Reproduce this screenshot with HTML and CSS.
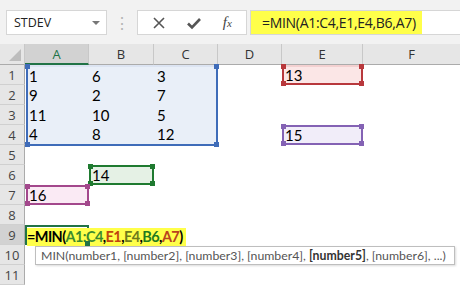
FILE: index.html
```html
<!doctype html>
<html lang="en">

<head>
  <meta charset="UTF-8" />
  <title>MIN formula</title>
  <link rel="stylesheet" href="styles.css">
</head>

<body>
  <div class="toolbar">
    <div class="namebox">
      <span class="name">STDEV</span>
      <span class="caret"></span>
    </div>
    <div class="grip">⋮</div>
    <div class="fx-buttons">
      <svg class="ico" width="14" height="14" viewBox="0 0 14 14"><path d="M2 2 L12 12 M12 2 L2 12" stroke="#555" stroke-width="1.6" fill="none" /></svg>
      <svg class="ico" width="16" height="14" viewBox="0 0 16 14"><path d="M2 7.5 L6 11.5 L14 3" stroke="#555" stroke-width="2.6" fill="none" /></svg>
      <span class="fx">f<sub>x</sub></span>
    </div>
    <div class="formula"><span class="hl">=MIN(A1:C4,E1,E4,B6,A7)</span></div>
  </div>

  <div class="sheet">
    <div class="corner"><span class="tri"></span></div>
    <div class="colhead sel">A</div>
    <div class="colhead">B</div>
    <div class="colhead">C</div>
    <div class="colhead">D</div>
    <div class="colhead">E</div>
    <div class="colhead last">F</div>

    <div class="rowhead r1">1</div>
    <div class="rowhead r2">2</div>
    <div class="rowhead r3">3</div>
    <div class="rowhead r4">4</div>
    <div class="rowhead r5">5</div>
    <div class="rowhead r6">6</div>
    <div class="rowhead r7">7</div>
    <div class="rowhead r8">8</div>
    <div class="rowhead r9 sel">9</div>
    <div class="rowhead r10">10</div>
    <div class="rowhead r11">11</div>

    <div class="ref ref-range">
      <span class="h tl"></span><span class="h tr"></span><span class="h bl"></span><span class="h br"></span>
      <div class="cell">1</div><div class="cell">6</div><div class="cell">3</div>
      <div class="cell">9</div><div class="cell">2</div><div class="cell">7</div>
      <div class="cell">11</div><div class="cell">10</div><div class="cell">5</div>
      <div class="cell">4</div><div class="cell">8</div><div class="cell">12</div>
    </div>

    <div class="ref ref-e1">
      <span class="h tl"></span><span class="h tr"></span><span class="h bl"></span><span class="h br"></span>
      <div class="cell">13</div>
    </div>

    <div class="ref ref-e4">
      <span class="h tl"></span><span class="h tr"></span><span class="h bl"></span><span class="h br"></span>
      <div class="cell">15</div>
    </div>

    <div class="ref ref-b6">
      <span class="h tl"></span><span class="h tr"></span><span class="h bl"></span><span class="h br"></span>
      <div class="cell">14</div>
    </div>

    <div class="ref ref-a7">
      <span class="h tl"></span><span class="h tr"></span><span class="h bl"></span><span class="h br"></span>
      <div class="cell">16</div>
    </div>

    <div class="active">
      <span class="h br"></span>
      <span class="edit">=MIN(<span class="c1">A1:C4</span>,<span class="c2">E1</span>,<span class="c3">E4</span>,<span class="c4">B6</span>,<span class="c5">A7</span>)</span>
    </div>

    <div class="tip">MIN(number1, [number2], [number3], [number4], <b>[number5]</b>, [number6], ...)</div>
  </div>
</body>

</html>
```

FILE: styles.css
```css
* {
  box-sizing: border-box;
}

body {
  margin: 0;
  background: #FFFFFF;
  font-family: Lato, "Liberation Sans", sans-serif;
  color: #000000;
  width: 460px;
  height: 286px;
  overflow: hidden;
}

/* formula bar */

.toolbar {
  display: flex;
  align-items: center;
  height: 44px;
  padding: 10px 0 9px 6px;
  background: #F2F2F2;
}

.namebox {
  display: flex;
  align-items: center;
  justify-content: space-between;
  width: 101px;
  height: 25px;
  padding: 0 6px 0 7px;
  background: #FFFFFF;
  border: 1px solid #D6D6D6;
  font-family: "Open Sans", sans-serif;
  font-size: 12.5px;
  color: #222222;
}

.caret {
  width: 0;
  height: 0;
  border-left: 4px solid transparent;
  border-right: 4px solid transparent;
  border-top: 4px solid #777777;
}

.grip {
  width: 30px;
  text-align: center;
  color: #B5B5B5;
  font-size: 16px;
}

.fx-buttons {
  display: flex;
  align-items: center;
  justify-content: space-around;
  width: 110px;
  height: 25px;
  padding: 0 4px;
  background: #FFFFFF;
  border: 1px solid #D6D6D6;
}

.fx {
  font-family: "Liberation Serif", serif;
  font-style: italic;
  font-size: 15px;
  color: #444444;
}

.fx sub {
  font-size: 11px;
  vertical-align: 0;
}

.formula {
  flex: 1;
  height: 25px;
  margin-left: 3px;
  background: #FFFFFF;
  border: 1px solid #D6D6D6;
  border-right: none;
}

.formula .hl {
  display: inline-block;
  height: 100%;
  padding: 0 6px 0 11px;
  line-height: 23px;
  background: #FFFF4A;
  font-family: "Open Sans", sans-serif;
  font-size: 14px;
  letter-spacing: -0.3px;
  color: #222222;
}

/* sheet grid */

.sheet {
  display: grid;
  grid-template-columns: 25px 64px 65px 64px 64px 81px 1fr;
  grid-template-rows: 21px repeat(11, 20px);
  font-size: 15px;
}

.corner {
  position: relative;
  grid-column: 1;
  grid-row: 1;
  background: #E6E6E6;
  border-right: 1px solid #C8C8C8;
  border-bottom: 1px solid #ABABAB;
}

.corner .tri {
  position: absolute;
  right: 3px;
  bottom: 3px;
  width: 0;
  height: 0;
  border-left: 12px solid transparent;
  border-bottom: 12px solid #BDBDBD;
}

.colhead {
  grid-row: 1;
  display: flex;
  align-items: center;
  justify-content: center;
  background: #E6E6E6;
  border-right: 1px solid #C8C8C8;
  border-bottom: 1px solid #ABABAB;
  font-family: "Open Sans", sans-serif;
  font-size: 13px;
  color: #333333;
}

.colhead.last {
  border-right: none;
}

.colhead.sel {
  background: #D2D2D2;
  color: #217346;
  border-bottom: 2px solid #217346;
}

.rowhead {
  grid-column: 1;
  display: flex;
  align-items: center;
  justify-content: center;
  background: #E6E6E6;
  border-right: 1px solid #ABABAB;
  border-bottom: 1px solid #D0D0D0;
  font-family: "Open Sans", sans-serif;
  font-size: 13px;
  color: #444444;
}

.rowhead.sel {
  background: #D2D2D2;
}

.r1 { grid-row: 2; }
.r2 { grid-row: 3; }
.r3 { grid-row: 4; }
.r4 { grid-row: 5; }
.r5 { grid-row: 6; }
.r6 { grid-row: 7; }
.r7 { grid-row: 8; }
.r8 { grid-row: 9; }
.r9 { grid-row: 10; }
.r10 { grid-row: 11; }
.r11 { grid-row: 12; }

/* reference boxes */

.ref {
  position: relative;
  display: grid;
  border: 2px solid;
}

.cell {
  display: flex;
  align-items: center;
  padding-left: 1px;
  line-height: 1;
}

.h {
  position: absolute;
  width: 5px;
  height: 5px;
  background: inherit;
}

.ref .h {
  background: currentColor;
}

.h.tl { left: -3px; top: -3px; }
.h.tr { right: -3px; top: -3px; }
.h.bl { left: -3px; bottom: -3px; }
.h.br { right: -3px; bottom: -3px; }

.ref .cell {
  color: #000000;
}

.ref-range {
  grid-column: 2 / 5;
  grid-row: 2 / 6;
  grid-template-columns: 63px 65px 1fr;
  grid-template-rows: repeat(4, 1fr);
  margin: 0 0 -1px 1px;
  color: #3F6CB9;
  background: #E9EFF8;
  border-top-color: #DCE4F2;
}

.ref-e1 {
  grid-column: 6;
  grid-row: 2;
  color: #B8383C;
  background: #FBE6E6;
  border-top-color: #F3D0D0;
}

.ref-e4 {
  grid-column: 6;
  grid-row: 5;
  color: #8462B4;
  background: #F1EDF9;
}

.ref-b6 {
  grid-column: 3;
  grid-row: 7;
  color: #1F7A30;
  background: #E5F1E5;
}

.ref-a7 {
  grid-column: 2;
  grid-row: 8;
  margin-left: 1px;
  color: #A3488C;
  background: #FAEAF4;
}

/* active cell with formula being typed */

.active {
  position: relative;
  grid-column: 2;
  grid-row: 10;
  border: 2px solid #217346;
  white-space: nowrap;
}

.active .h {
  background: #217346;
}

.edit {
  display: inline-block;
  height: 18px;
  margin-top: -1px;
  padding-right: 3px;
  line-height: 18px;
  background: #FFFF4A;
  font-weight: bold;
  font-size: 14.5px;
  letter-spacing: -0.6px;
}

.c1 { color: #3C8A2E; }
.c2 { color: #C0440F; }
.c3 { color: #6E7A1C; }
.c4 { color: #1F7A1F; }
.c5 { color: #B8431E; }

.tip {
  grid-column: 2 / -1;
  grid-row: 11;
  width: 420px;
  height: 19px;
  margin: 1px 0 0 10px;
  padding-left: 5px;
  background: #FFFFFF;
  border: 1px solid #BEBEBE;
  box-shadow: 1px 1px 2px rgba(0, 0, 0, 0.15);
  font-size: 12.3px;
  line-height: 17px;
  color: #555555;
  white-space: nowrap;
}

.tip b {
  color: #333333;
}
```
